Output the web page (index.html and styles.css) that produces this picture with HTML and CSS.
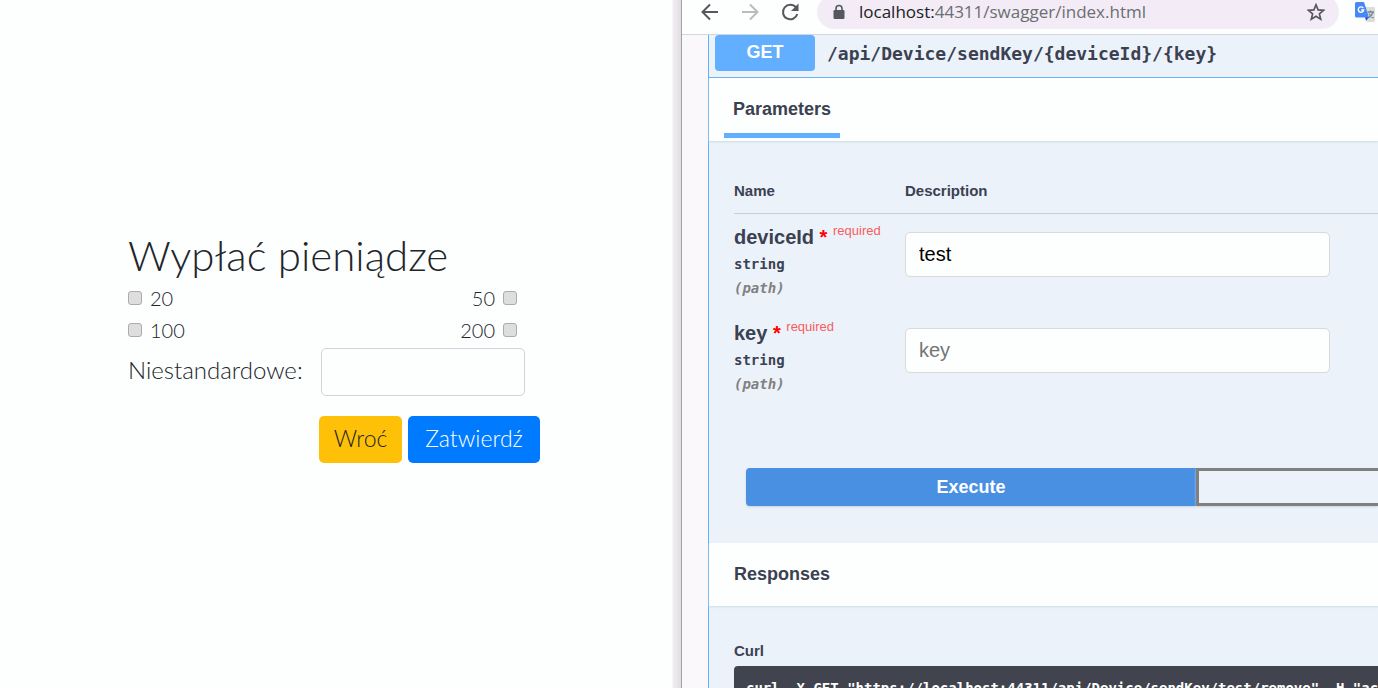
FILE: index.html
```html
<!DOCTYPE html>
<html lang="pl">
<head>
<meta charset="utf-8">
<title>Wypłać pieniądze</title>
<link rel="stylesheet" href="styles.css">
</head>
<body>
<main class="atm">
  <form class="withdraw">
    <h1 class="withdraw-title">Wypłać pieniądze</h1>
    <div class="amounts">
      <label class="amount"><input class="amount-check" type="checkbox">20</label>
      <label class="amount amount-end">50<input class="amount-check" type="checkbox"></label>
      <label class="amount"><input class="amount-check" type="checkbox">100</label>
      <label class="amount amount-end">200<input class="amount-check" type="checkbox"></label>
    </div>
    <div class="custom">
      <label for="custom-amount">Niestandardowe:</label>
      <input class="custom-input" id="custom-amount" type="text">
    </div>
    <div class="actions">
      <button class="btn btn-back" type="button">Wroć</button>
      <button class="btn btn-confirm" type="button">Zatwierdź</button>
    </div>
  </form>
</main>
<section class="browser">
  <header class="toolbar">
    <button class="tool" type="button" aria-label="Back"><svg width="20" height="20" viewBox="0 0 20 20"><path d="M18 10H3M10 2.500L2.500 10L10 17.500" fill="none" stroke="#55585c" stroke-width="2"/></svg></button>
    <button class="tool" type="button" aria-label="Forward"><svg width="20" height="20" viewBox="0 0 20 20"><path d="M2 10H17M10 2.500L17.500 10L10 17.500" fill="none" stroke="#b9bbbe" stroke-width="2"/></svg></button>
    <button class="tool" type="button" aria-label="Reload"><svg width="20" height="20" viewBox="0 0 20 20"><path d="M16 5.500A7.300 7.300 0 1 0 17.300 12" fill="none" stroke="#55585c" stroke-width="2"/><path d="M18.500 1.500V9H11z" fill="#55585c"/></svg></button>
    <div class="address">
      <svg class="lock" width="12" height="16" viewBox="0 0 12 16"><path d="M3 7V4.500a3 3 0 0 1 6 0V7" fill="none" stroke="#55585c" stroke-width="1.600"/><rect x="0.500" y="6" width="11" height="9" rx="1.200" fill="#55585c"/></svg>
      <span class="url"><span class="host">localhost:</span>44311/swagger/index.html</span>
      <button class="star" type="button" aria-label="Bookmark"><svg width="18" height="18" viewBox="0 0 18 18"><path d="M9 1.800L11.100 6.900L16.600 7.300L12.400 10.900L13.700 16.200L9 13.300L4.300 16.200L5.600 10.900L1.400 7.300L6.900 6.900Z" fill="none" stroke="#55585c" stroke-width="1.700"/></svg></button>
    </div>
    <button class="translate" type="button" aria-label="Translate"><svg width="20" height="20" viewBox="0 0 20 20"><path d="M8 5H18.500A1.500 1.500 0 0 1 20 6.500V18.500A1.500 1.500 0 0 1 18.500 20H12z" fill="#dcdcdc"/><path d="M12.500 10H19M15.500 8.500V10M18 10Q17 14 13.500 16M14 11.500Q15.500 14.500 18.500 16" fill="none" stroke="#6f8b90" stroke-width="1.300"/><path d="M10 15H14L11 19z" fill="#2a4fc0"/><path d="M1.500 0H9L14 15.500H1.500A1.500 1.500 0 0 1 0 14V1.500A1.500 1.500 0 0 1 1.500 0" fill="#4688f4"/><path d="M8.200 6A2.700 2.700 0 1 0 8.700 8H6.200" fill="none" stroke="#fff" stroke-width="1.400"/></svg></button>
  </header>
  <div class="page">
    <article class="operation">
      <div class="summary">
        <span class="method">GET</span>
        <span class="path">/api/Device/sendKey/{deviceId}/{key}</span>
      </div>
      <div class="section-head">
        <h2 class="tab">Parameters</h2>
      </div>
      <div class="params">
        <table class="param-table">
          <thead>
            <tr><th class="col-name">Name</th><th>Description</th></tr>
          </thead>
          <tbody>
            <tr>
              <td>
                <label class="param-name" for="device-id">deviceId <span class="mark">*</span> <span class="required">required</span></label>
                <div class="param-type">string</div>
                <div class="param-in">(path)</div>
              </td>
              <td><input class="param-input" id="device-id" type="text" value="test"></td>
            </tr>
            <tr>
              <td>
                <label class="param-name" for="key">key <span class="mark">*</span> <span class="required">required</span></label>
                <div class="param-type">string</div>
                <div class="param-in">(path)</div>
              </td>
              <td><input class="param-input" id="key" type="text" placeholder="key"></td>
            </tr>
          </tbody>
        </table>
      </div>
      <div class="execute-row">
        <button class="execute" type="button">Execute</button>
        <button class="clear" type="button" aria-label="Clear"></button>
      </div>
      <div class="section-head responses-head">
        <h2 class="responses-title">Responses</h2>
      </div>
      <div class="responses">
        <h3 class="curl-title">Curl</h3>
        <pre class="curl">curl -X GET "https://localhost:44311/api/Device/sendKey/test/remove" -H "accept: */*"</pre>
      </div>
    </article>
  </div>
</section>
</body>
</html>
```
FILE: styles.css
```css
* { box-sizing: border-box; }

body {
  margin: 0;
  height: 100vh;
  display: flex;
  overflow: hidden;
  background: #fdfefe;
  color: #3b4151;
  font-family: "Liberation Sans", sans-serif;
}

h1, h2, h3 { margin: 0; }

button { padding: 0; border: 0; background: none; font-family: inherit; cursor: pointer; }

svg { display: block; }

/* Withdrawal form */
.atm {
  flex: 0 0 681px;
  padding: 230px 128px 0;
  background: linear-gradient(to right, #fdfefe 672px, #f3ecf5 673px, #dfdfdf 681px);
  color: #212529;
  font-family: Lato, sans-serif;
  font-weight: 300;
  font-size: 20px;
  line-height: 32px;
}

.withdraw { width: 412px; }

.withdraw-title {
  font-size: 42px;
  line-height: 50px;
  font-weight: 300;
}

.amounts {
  display: grid;
  grid-template-columns: 1fr 1fr;
  width: 389px;
  margin-top: 2px;
}

.amount { display: flex; align-items: center; gap: 8px; }

.amount-end { justify-content: flex-end; }

.amount-check {
  appearance: none;
  width: 14px;
  height: 14px;
  margin: 0;
  border: 1px solid #acacac;
  border-radius: 3px;
  background: #dedede;
}

.custom {
  display: flex;
  justify-content: space-between;
  width: 397px;
  margin-top: 2px;
  font-size: 24px;
  line-height: 44px;
}

.custom-input {
  width: 204px;
  height: 48px;
  padding: 8px 12px;
  border: 1px solid #ced4da;
  border-radius: 5px;
  background: #fdfefe;
  font: inherit;
}

.actions {
  display: flex;
  justify-content: flex-end;
  gap: 6px;
  margin-top: 20px;
}

.btn {
  height: 47px;
  padding: 0 8px 4px;
  border-radius: 5px;
  font-size: 23px;
  font-weight: 300;
}

.btn-back { width: 83px; background: #ffc107; color: #212529; }

.btn-confirm { width: 132px; background: #007bff; color: #fff; }

/* Browser window */
.browser {
  flex: 1;
  min-width: 0;
  overflow: hidden;
  border-left: 1px solid #a3a3a3;
}

.toolbar {
  display: flex;
  align-items: center;
  height: 35px;
  padding: 0 0 11px 18px;
  border-bottom: 1px solid #d5d5dd;
  background: #fdfefe;
}

.tool { margin-right: 20px; }

.address {
  flex: 1;
  display: flex;
  align-items: center;
  height: 34px;
  margin-left: -3px;
  padding: 0 14px 0 16px;
  border-radius: 17px;
  background: #f3ecf6;
}

.lock { margin-right: 14px; }

.url {
  flex: 1;
  color: #6b6e72;
  font-family: "Open Sans", sans-serif;
  font-size: 17px;
  line-height: 24px;
}

.host { color: #202124; }

.translate { margin: 0 3px 0 16px; }

/* API operation */
.page { padding-left: 26px; background: #fbf8fc; }

.operation { border-left: 1px solid #61affe; background: #ebf2fa; }

.summary {
  display: flex;
  align-items: center;
  gap: 12px;
  height: 43px;
  padding: 0 0 6px 6px;
  border-bottom: 1px solid #61affe;
}

.method {
  width: 100px;
  height: 36px;
  border-radius: 4px;
  background: #61affe;
  color: #fff;
  font-size: 18px;
  font-weight: 700;
  line-height: 34px;
  text-align: center;
}

.path {
  font-family: "DejaVu Sans Mono", monospace;
  font-size: 18px;
  font-weight: 700;
}

.section-head {
  display: flex;
  align-items: flex-end;
  height: 63px;
  padding-left: 15px;
  background: #fdfefe;
  box-shadow: 0 1px 2px #cadbe2;
}

.tab {
  height: 55px;
  margin-bottom: 3px;
  padding: 15px 9px 0;
  border-bottom: 5px solid #61affe;
  font-size: 18px;
  line-height: 22px;
}

.params { padding: 36px 0 0 25px; }

.param-table { width: 100%; border-spacing: 0; }

.param-table th {
  height: 37px;
  padding: 2px 0 10px;
  border-bottom: 1px solid #c8cdd7;
  font-size: 15px;
  line-height: 24px;
  text-align: left;
}

.param-table .col-name { width: 171px; }

.param-table td { height: 96px; padding: 9px 0 0; vertical-align: top; }

.param-name {
  display: block;
  font-size: 20px;
  font-weight: 700;
  line-height: 29px;
}

.mark { color: #f00; }

.required {
  color: #f95c61;
  font-size: 13px;
  font-weight: 400;
  vertical-align: top;
  line-height: 16px;
}

.param-type, .param-in {
  font-family: "DejaVu Sans Mono", monospace;
  font-size: 14px;
  font-weight: 700;
  line-height: 24px;
}

.param-in { color: #808080; font-style: italic; }

.param-input {
  display: block;
  width: 425px;
  height: 45px;
  margin-top: 9px;
  padding: 0 13px;
  border: 1px solid #d9d9d9;
  border-radius: 5px;
  background: #fdfefe;
  color: #000;
  font-family: inherit;
  font-size: 20px;
}

.param-input::placeholder { color: #757575; }

.execute-row { display: flex; height: 137px; padding: 62px 0 37px 37px; }

.execute {
  flex: 0 0 450px;
  border-radius: 4px 0 0 4px;
  background: #4990e2;
  box-shadow: 0 1px 2px #cbd5df;
  color: #fff;
  font-size: 18px;
  font-weight: 700;
}

.clear {
  flex: 1;
  border: 3px solid #808080;
  border-right: 0;
  box-shadow: 0 1px 2px #cbd5df;
}

.responses-head { align-items: center; padding-left: 25px; }

.responses-title { font-size: 18px; }

.responses { padding: 32px 0 0 25px; }

.curl-title { padding-bottom: 2px; font-size: 15px; line-height: 26px; }

.curl {
  margin: 0;
  padding: 10px 12px;
  border-radius: 4px 0 0 4px;
  background: #41444e;
  color: #fff;
  font-family: "DejaVu Sans Mono", monospace;
  font-size: 14px;
  font-weight: 700;
  line-height: 24px;
}
```
